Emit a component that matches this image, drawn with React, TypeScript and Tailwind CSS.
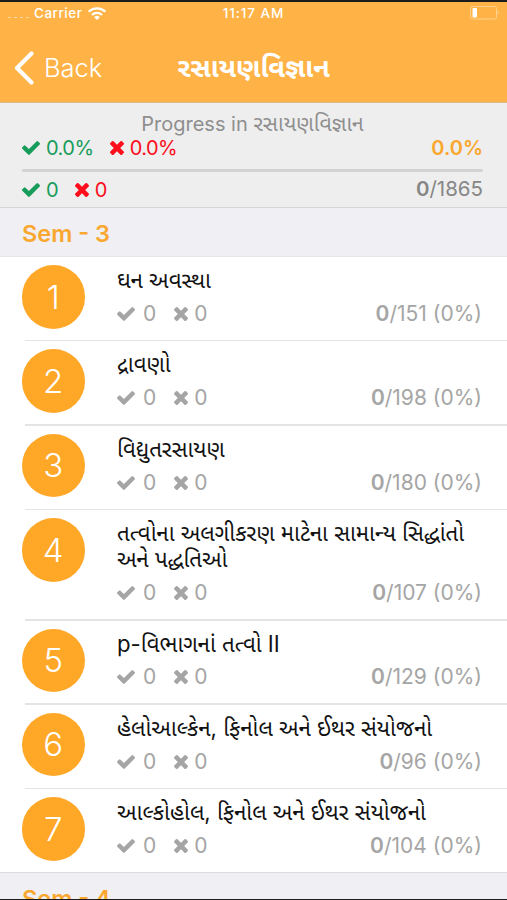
import React from "react";

interface Chapter {
  id: number;
  title: string;
  total: number;
}

const chapters: Chapter[] = [
  { id: 1, title: "ઘન અવસ્થા", total: 151 },
  { id: 2, title: "દ્રાવણો", total: 198 },
  { id: 3, title: "વિદ્યુતરસાયણ", total: 180 },
  {
    id: 4,
    title: "તત્વોના અલગીકરણ માટેના સામાન્ય સિદ્ધાંતો અને પદ્ધતિઓ",
    total: 107,
  },
  { id: 5, title: "p-વિભાગનાં તત્વો II", total: 129 },
  { id: 6, title: "હેલોઆલ્કેન, ફિનોલ અને ઈથર સંયોજનો", total: 96 },
  { id: 7, title: "આલ્કોહોલ, ફિનોલ અને ઈથર સંયોજનો", total: 104 },
];

const CheckIcon = () => (
  <svg viewBox="121 334 1550 1188" className="h-3.5 w-[18px]" fill="currentColor">
    <path d="M1671 566q0 40-28 68l-724 724-136 136q-28 28-68 28t-68-28l-136-136-362-362q-28-28-28-68t28-68l136-136q28-28 68-28t68 28l294 295 656-657q28-28 68-28t68 28l136 136q28 28 28 68z" />
  </svg>
);

const CrossIcon = () => (
  <svg viewBox="302 366 1188 1188" className="size-3.5" fill="currentColor">
    <path d="M1490 1322q0 40-28 68l-136 136q-28 28-68 28t-68-28l-294-294-294 294q-28 28-68 28t-68-28l-136-136q-28-28-28-68t28-68l294-294-294-294q-28-28-28-68t28-68l136-136q28-28 68-28t68 28l294 294 294-294q28-28 68-28t68 28l136 136q28 28 28 68t-28 68l-294 294 294 294q28 28 28 68z" />
  </svg>
);

const StatusBar = () => (
  <div className="grid h-[22px] grid-cols-3 items-center px-2 text-[13.5px] font-medium">
    <div className="flex items-center">
      <div className="mt-2 flex w-[26px] gap-[3px]">
        <i className="h-px w-[3px] bg-white/50" />
        <i className="h-px w-[3px] bg-white/50" />
        <i className="h-px w-[3px] bg-white/50" />
        <i className="h-px w-[3px] bg-white/50" />
      </div>
      <span className="tracking-[0.5px]">Carrier</span>
      <svg viewBox="0 0 18 13" className="ml-1.5 h-[13px] w-[18px]" fill="none" stroke="white" strokeWidth="2.3">
        <path d="M0.8 4.7a11.6 11.6 0 0 1 16.4 0" />
        <path d="M4 8a7 7 0 0 1 10 0" />
        <path d="M9 13L6.2 10.2a4 4 0 0 1 5.6 0z" fill="white" stroke="none" />
      </svg>
    </div>
    <span className="text-center tracking-[0.9px]">11:17 AM</span>
    <svg viewBox="0 0 29 14" className="h-3.5 w-[29px] justify-self-end" fill="none">
      <rect x="0.5" y="0.5" width="26" height="12.5" rx="2" stroke="#ffd08a" />
      <rect x="2.5" y="2" width="4.5" height="9.5" rx="1" fill="white" />
      <path d="M27.5 4.5q2.4 2.2 0 4.5z" fill="#ffd08a" />
    </svg>
  </div>
);

const ChapterRow: React.FC<{ chapter: Chapter; last: boolean }> = ({ chapter, last }) => (
  <li className="flex pl-[21.5px]">
    <div className="mt-2 flex size-[63.5px] shrink-0 items-center justify-center rounded-full bg-[#ffa726] pt-px text-[33px] font-light text-white">
      {chapter.id}
    </div>
    <div className="relative ml-8 flex-1 pb-[14.6px] pr-[25px] pt-2.5">
      <h3 className="text-[22.2px] leading-[26px] text-[#111]">{chapter.title}</h3>
      <div className="mt-[7.8px] flex h-[26px] items-center text-[21px] leading-[26px] text-[#a5a5a5]">
        <CheckIcon />
        <span className="ml-2">0</span>
        <span className="ml-[18px]">
          <CrossIcon />
        </span>
        <span className="ml-1.5">0</span>
        <span className="ml-auto">
          <b className="font-semibold">0</b>/{chapter.total} (0%)
        </span>
      </div>
      {/* 구분선은 원 아래까지 이어진다 */}
      {!last && <div className="absolute -left-[92px] bottom-0 right-0 h-[1.5px] bg-[#e4e4e6]" />}
    </div>
  </li>
);

const App = () => {
  return (
    <div className="flex h-[900px] w-[507px] flex-col overflow-hidden border-b border-t-2 border-[#1c1c1c] bg-white font-['Inter','Noto_Sans_Gujarati','Noto_Sans',sans-serif]">
      {/* 헤더 */}
      <header className="h-[101px] shrink-0 border-b border-[#d8b98c] bg-[#ffb347] text-white">
        <StatusBar />
        <div className="grid h-[88px] grid-cols-[1fr_auto_1fr] items-center px-3.5">
          <button className="flex items-center gap-[10px] text-[25.5px] font-light">
            <svg viewBox="0 0 20 34" className="h-[34px] w-5" fill="none" stroke="white" strokeWidth="4.2" strokeLinecap="round" strokeLinejoin="round">
              <path d="M17.5 2.5L3 17l14.5 14.5" />
            </svg>
            Back
          </button>
          <h1 className="text-[27px] font-bold">રસાયણવિજ્ઞાન</h1>
        </div>
      </header>

      {/* 전체 진행률 */}
      <section className="h-[105px] shrink-0 border-b border-[#d6d6d9] bg-[#eeeeee] pl-[22px] pr-6 text-[20px]">
        <p className="h-[33px] pt-[7px] text-center leading-[26px] text-[#8e8e8e]">
          Progress in <span className="text-[21.3px]">રસાયણવિજ્ઞાન</span>
        </p>
        <div className="-mt-px flex h-[26px] items-center">
          <div className="flex items-center gap-1.5 tracking-[-0.5px] text-[#179c5b]">
            <CheckIcon />
            0.0%
          </div>
          <div className="ml-4 flex items-center gap-1.5 tracking-[-0.5px] text-[#fb0d1b]">
            <CrossIcon />
            0.0%
          </div>
          <b className="ml-auto font-semibold text-[#f9a72f]">0.0%</b>
        </div>
        <div className="mt-2 h-[3px] rounded-full bg-[#d2d2d2]" />
        <div className="mt-[5px] flex h-[25px] items-center">
          <div className="flex items-center gap-1.5 text-[#179c5b]">
            <CheckIcon />0
          </div>
          <div className="ml-4 flex items-center gap-1.5 text-[#fb0d1b]">
            <CrossIcon />0
          </div>
          <span className="ml-auto text-[20.5px] text-[#868686]">
            <b className="font-semibold">0</b>/1865
          </span>
        </div>
      </section>

      <h2 className="h-[49px] shrink-0 border-b border-[#e6e6ea] bg-[#efeff4] pl-[22px] text-[23.5px] font-semibold leading-[52px] text-[#f9a72f]">
        Sem - 3
      </h2>
      <ul className="h-[615px] shrink-0">
        {chapters.map((chapter, index) => (
          <ChapterRow key={chapter.id} chapter={chapter} last={index === chapters.length - 1} />
        ))}
      </ul>
      <h2 className="h-[49px] shrink-0 border-t border-[#dcdce0] bg-[#efeff4] pl-[22px] text-[23.5px] font-semibold leading-[51px] text-[#f9a72f]">
        Sem - 4
      </h2>
    </div>
  );
};

export default App;
